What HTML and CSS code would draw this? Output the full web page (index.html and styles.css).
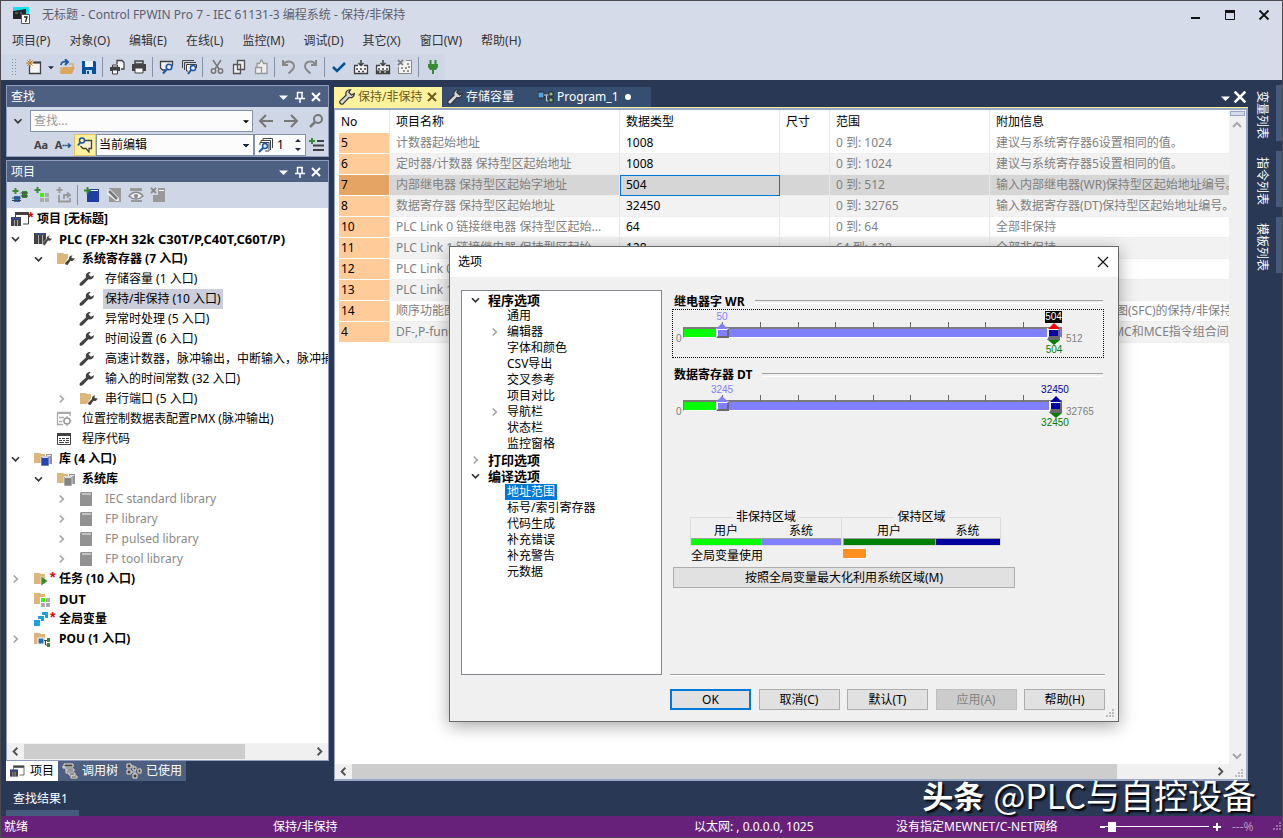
FILE: index.html
```html
<!DOCTYPE html>
<html lang="zh-CN">
<head>
    <meta charset="UTF-8">
    <meta name="viewport" content="width=device-width, initial-scale=1.0">
    <title>无标题 - Control FPWIN Pro 7</title>
    <link rel="stylesheet" href="styles.css">
</head>
<body>
    <!-- Icon sprite -->
    <svg class="sprite" aria-hidden="true">
        <symbol id="wrench" viewBox="0 0 16 16"><path d="M15 4.200a4.200 4.200 0 0 1-5.600 4L4.600 13.200Q2.500 15.500 .800 14.500 0 12.800 1.500 11.500L7 6.400A4.200 4.200 0 0 1 11.800 1L9.600 3.500 12 5.800Z" fill="#424242"/></symbol>
        <symbol id="key" viewBox="0 0 16 16"><path d="M15.300 4.500a4 4 0 0 1-5.300 4L4.500 14.300a2 2 0 0 1-3.300-2.500L7 6.200A4.200 4.200 0 0 1 11.600 .800L9.800 3.200 12.500 6Z" fill="#d8d8d8" stroke="#333" stroke-width="1.200"/></symbol>
        <symbol id="down" viewBox="0 0 16 16"><path d="M4 6l4 4 4-4" fill="none" stroke="#333" stroke-width="2"/></symbol>
        <symbol id="right" viewBox="0 0 16 16"><path d="M6 4l4 4-4 4" fill="none" stroke="#a6a6a6" stroke-width="2"/></symbol>
        <symbol id="folder-wrench" viewBox="0 0 20 16"><path d="M1 2h6l1 1h4v4L8 13H1z" fill="#dcb67a"/><path d="M18.500 7a3 3 0 0 1-4 2.800L11.500 14l-2-.500L9 12l4-4a3 3 0 0 1 3.500-3.500L15.200 6.200 17 7.500Z" fill="#424242"/></symbol>
        <symbol id="plc" viewBox="0 0 20 16"><path d="M1 2h12v11H1z" fill="#424242"/><path d="M2 3h3M6 3h3M10 3h3" stroke="#2b50e0" stroke-width="1.500"/><path d="M5.500 4v9M9.500 4v9" stroke="#aaa"/><path d="M19 7a3 3 0 0 1-4 2.800L12 14.500l-2-.500L9.500 12l4-4A3 3 0 0 1 17 4.500L15.700 6.200 17.500 7.500Z" fill="#424242" stroke="#fff" stroke-width=".5"/></symbol>
        <symbol id="project" viewBox="0 0 20 16"><path d="M4 1h14v3H4z" fill="#424242"/><path d="M17.500 4v9H12M4.500 4v3" stroke="#424242" fill="none"/><path d="M0 6h10v9H0z" fill="#424242"/><path d="M1 7.500h2M4 7.500h2M7 7.500h2" stroke="#2b50e0" stroke-width="1.500"/><path d="M3.500 9v6M6.500 9v6" stroke="#aaa"/></symbol>
        <symbol id="table-cfg" viewBox="0 0 16 16"><path d="M1 1.500h13V5M1.500 2v11.500H7M3 6.500h5M3 10.500h3" stroke="#aaa" stroke-width="1.300" fill="none"/><path d="M1 1h14v2H1z" fill="#aaa"/><circle cx="11" cy="10" r="3" fill="none" stroke="#999" stroke-width="1.500"/><path d="M11 5v2M11 13v2M6.500 10H8M14 10h1.500" stroke="#999"/></symbol>
        <symbol id="code" viewBox="0 0 16 16"><path d="M1.500 2.500h13v11h-13z" fill="#fff" stroke="#424242"/><path d="M1 2h14v3H1z" fill="#424242"/><path d="M3 7.500h2M6 7.500h3M10 7.500h3M3 9.500h3M7 9.500h2M10 9.500h3M3 11.500h5M9 11.500h4" stroke="#424242"/></symbol>
        <symbol id="lib" viewBox="0 0 20 16"><path d="M1 2h6l1 1h4v9H1z" fill="#dcb67a"/><path d="M13 3h6v10h-6z" fill="#929292"/><path d="M8 5.500h8V15H8z" fill="currentColor" stroke="#fff" stroke-width=".600"/><path d="M9 6.500h6M14 4.500h4" stroke="#fff" stroke-width=".800"/></symbol>
        <symbol id="book" viewBox="0 0 16 16"><path d="M1 2l1-1h11v14H1z" fill="#929292"/><path d="M3 3h9" stroke="#f4f4f4"/></symbol>
        <symbol id="task" viewBox="0 0 20 16"><path d="M1 2h6l1 1h4v10H1z" fill="#dcb67a"/><path d="M8 5l7 5-7 5z" fill="#388a34" stroke="#fff" stroke-width=".600"/></symbol>
        <symbol id="dut" viewBox="0 0 20 16"><path d="M1 2h6l1 1h4v10H1z" fill="#dcb67a"/><path d="M7 6h10v10H7z" fill="#fff"/><path d="M8 7h4v4H8z" fill="#40f000"/><path d="M13 7h4v4h-4zM8 12h4v4H8zM13 12h4v4h-4z" fill="#aaa"/></symbol>
        <symbol id="globals" viewBox="0 0 20 16"><path d="M1 9h6v6H1zM5 5h6v5H8V8H5zM9 1h6v6h-3V4H9z" fill="#1ba1e2"/></symbol>
        <symbol id="pou" viewBox="0 0 20 16"><path d="M1 2h6l1 1h4v10H1z" fill="#dcb67a"/><path d="M5 7h6v6H5z" fill="#1e6fc0" stroke="#fff"/><path d="M11 9.500h4M12.500 9v5H15" stroke="#424242" fill="none"/><path d="M14 7h3v4h-3zM14 12h3v4h-3z" fill="#388a34"/></symbol>
        <symbol id="caret" viewBox="0 0 8 8"><path d="M0 3h8L4 7z" fill="currentColor"/></symbol>
        <symbol id="pin" viewBox="0 0 12 12"><path d="M3.500 1v6M3 1.500h6M8 1v6M1 7.500h10M6 8v4" stroke="#fff" stroke-width="1.500" fill="none"/></symbol>
        <symbol id="close" viewBox="0 0 12 12"><path d="M2 2l8 8M10 2l-8 8" stroke="currentColor" stroke-width="2"/></symbol>
        <symbol id="lens" viewBox="0 0 16 16"><circle cx="10" cy="6" r="4" fill="none" stroke="currentColor" stroke-width="2"/><path d="M7 9l-5 5" stroke="currentColor" stroke-width="2.500"/></symbol>
        <symbol id="printer" viewBox="0 0 16 16"><path d="M4 2h8v3H4z" fill="none" stroke="#424242" stroke-width="1.500"/><path d="M1 5h14v7H1z" fill="#424242"/><path d="M4 9h8v5H4z" fill="#f6f6f6" stroke="#424242"/></symbol>
        <symbol id="preview" viewBox="0 0 16 16"><path d="M6 11H3.500L1.500 9V2.500h12V7" fill="#f2f2f2" stroke="#424242" stroke-width="1.300"/><circle cx="10" cy="8" r="2.800" fill="#e6eefa" stroke="#1c55a5" stroke-width="1.600"/><path d="M8 10l-4 4.500" stroke="#1c55a5" stroke-width="2"/></symbol>
        <symbol id="build" viewBox="0 0 16 16"><path d="M1.500 7v7.500h13V7" fill="#f6f6f6" stroke="#424242" stroke-width="1.300"/><path d="M1 6.500h4M11 6.500h4M3 10h2M7 10h2M11 10h2M5 12.500h2M9 12.500h2" stroke="#424242" stroke-width="1.600"/><path d="M8 1v5M5.500 4L8 6.500 10.500 4" stroke="#424242" stroke-width="1.500" fill="none"/></symbol>
        <symbol id="plus" viewBox="0 0 8 8"><path d="M4 0v8M0 4h8" stroke="currentColor" stroke-width="2"/></symbol>
        <symbol id="grip" viewBox="0 0 10 10"><path d="M7 0h2v2H7zM4 3h2v2H4zM7 3h2v2H7zM1 6h2v2H1zM4 6h2v2H4zM7 6h2v2H7z" fill="currentColor"/></symbol>
    </svg>

    <!-- Title bar -->
    <header class="titlebar">
        <svg class="app-icon" viewBox="0 0 18 18"><path d="M1 1h16v11H1z" fill="#19dff0"/><path d="M1 5l13-2v10H1z" fill="#262626"/><path d="M3 7h3M8 7h2" stroke="#888"/><path d="M9.500 8.500h8v9h-8z" fill="#fff" stroke="#555"/><path d="M12 11h3l-1.500 5" stroke="#222" stroke-width="1.300" fill="none"/></svg>
        <span class="app-title">无标题 - Control FPWIN Pro 7 - IEC 61131-3 编程系统 - 保持/非保持</span>
        <div class="win-buttons">
            <button aria-label="最小化"><svg viewBox="0 0 12 12"><path d="M1 9h9" stroke="#111" stroke-width="2"/></svg></button>
            <button aria-label="最大化"><svg viewBox="0 0 12 12"><path d="M1.500 2h9v8.500h-9z" fill="none" stroke="#111"/><path d="M1 2.500h10" stroke="#111" stroke-width="3"/></svg></button>
            <button aria-label="关闭"><svg viewBox="0 0 12 12"><path d="M1.500 1.500l9 9M10.500 1.500l-9 9" stroke="#111" stroke-width="1.800"/></svg></button>
        </div>
    </header>

    <nav class="menubar">
        <a href="#">项目(P)</a>
        <a href="#">对象(O)</a>
        <a href="#">编辑(E)</a>
        <a href="#">在线(L)</a>
        <a href="#">监控(M)</a>
        <a href="#">调试(D)</a>
        <a href="#">其它(X)</a>
        <a href="#">窗口(W)</a>
        <a href="#">帮助(H)</a>
    </nav>

    <!-- Main toolbar -->
    <div class="toolbar-row">
        <div class="toolbar">
            <span class="handle"></span>
            <button aria-label="新建"><svg viewBox="0 0 16 16"><path d="M3.500 6v8.500h11V3.500H7" fill="#f6f6f6" stroke="#424242" stroke-width="1.300"/><path d="M8 2.500h7v2H8z" fill="#424242"/><path d="M4 0v8M0 4h8M1.300 1.300l5.400 5.400M6.700 1.300L1.300 6.700" stroke="#c27d1a"/></svg></button>
            <button class="slim" aria-label="更多"><svg viewBox="0 0 8 8"><use href="#caret"/></svg></button>
            <button aria-label="打开"><svg viewBox="0 0 16 16"><path d="M2 8V14M10 5h4v3" stroke="#dcb67a" stroke-width="2" fill="none"/><path d="M4 8h12l-3 7H1z" fill="#dca560"/><path d="M2 6c0-3 3-4 6-3M6 0l3 3-3 3" stroke="#1c55a5" stroke-width="1.800" fill="none"/></svg></button>
            <button aria-label="保存"><svg viewBox="0 0 16 16"><path d="M1 2h13l1 1v12H1z" fill="#00539c"/><path d="M4 2h8v6H4z" fill="#eef3fb"/><path d="M5 11h6v4H5z" fill="#d6dbe9"/><path d="M6 12h2v3H6z" fill="#00539c"/></svg></button>
            <i class="sep"></i>
            <button aria-label="打印全部"><svg viewBox="0 0 16 16"><path d="M8 5V1.500h5l2 2V10h-3" fill="#f6f6f6" stroke="#424242" stroke-width="1.300"/><path d="M1 8h10v4H1z" fill="#424242"/><path d="M3.500 6v2h5V6zM3.500 11h5v4h-5z" fill="#f6f6f6" stroke="#424242"/></svg></button>
            <button aria-label="打印"><svg><use href="#printer"/></svg></button>
            <i class="sep"></i>
            <button aria-label="预览"><svg><use href="#preview"/></svg></button>
            <button aria-label="预览全部"><svg viewBox="0 0 16 16"><path d="M1.500 9V1.500H13M3.500 11V3.500H15" fill="none" stroke="#424242"/><path d="M7 12H5.500V5.500h10V9" fill="#f2f2f2" stroke="#424242"/><circle cx="12" cy="9" r="2.600" fill="#e6eefa" stroke="#1c55a5" stroke-width="1.500"/><path d="M10 11l-3 4" stroke="#1c55a5" stroke-width="2"/></svg></button>
            <i class="sep"></i>
            <button aria-label="剪切"><svg viewBox="0 0 16 16"><path d="M4 1l6 9M12 1L6 10" stroke="#777" stroke-width="1.500"/><circle cx="4.500" cy="12" r="2.200" fill="none" stroke="#777" stroke-width="1.500"/><circle cx="11.500" cy="12" r="2.200" fill="none" stroke="#777" stroke-width="1.500"/></svg></button>
            <button aria-label="复制"><svg viewBox="0 0 16 16"><path d="M6.500 1.500h7v9h-7zM2.500 5.500h7v9h-7z" fill="#eee" stroke="#555" stroke-width="1.300"/></svg></button>
            <button aria-label="粘贴"><svg viewBox="0 0 16 16"><path d="M4 9V4.500h2.500L8 1.500h1L10.500 4.500H14v10H9" fill="#eee" stroke="#999" stroke-width="1.300"/><path d="M2.500 8.500h6v6h-6z" fill="#eee" stroke="#999" stroke-width="1.300"/></svg></button>
            <i class="sep"></i>
            <button aria-label="撤销"><svg viewBox="0 0 16 16"><path d="M2 1v5h5M2.500 5.500c2-4 8-4 10-.500s-1 6-5 9.500" stroke="#888" stroke-width="2" fill="none"/></svg></button>
            <button aria-label="重做"><svg viewBox="0 0 16 16"><path d="M13 1v5H8M12.500 5.500c-2-4-8-4-10-.500s1 6 5 9.500" stroke="#888" stroke-width="2" fill="none"/></svg></button>
            <i class="sep"></i>
            <button aria-label="检查"><svg viewBox="0 0 16 16"><path d="M2 8l4 4 8-8" stroke="#00539c" stroke-width="2.500" fill="none"/></svg></button>
            <button aria-label="编译"><svg><use href="#build"/></svg></button>
            <button aria-label="全部编译"><svg viewBox="0 0 16 16"><use href="#build"/><path d="M1 13h14" stroke="#424242" stroke-width="3"/><path d="M4 13h2M9 13h2" stroke="#fff"/></svg></button>
            <button aria-label="停止编译"><svg viewBox="0 0 16 16"><path d="M9 1.500h5.500v13h-13V8" fill="#f2f2f2" stroke="#888"/><path d="M1 1l5 5M6 1L1 6M4 9h2M8 9h2M6 12h2M10 12h2M10 5h2M11 8h2" stroke="#777" stroke-width="1.700"/></svg></button>
            <i class="sep"></i>
            <button aria-label="联机"><svg viewBox="0 0 16 16"><path d="M3 5h10v3l-2 3H5L3 8z" fill="#388a34"/><path d="M5.500 1v5M10.500 1v5M8 10v5" stroke="#388a34" stroke-width="2"/></svg></button>
        </div>
    </div>

    <main class="workspace">
        <!-- Left docks -->
        <aside class="dock">
            <section class="panel">
                <div class="panel-head">
                    <h2>查找</h2>
                    <svg class="tri"><use href="#caret"/></svg><svg><use href="#pin"/></svg><svg><use href="#close"/></svg>
                </div>
                <div class="find-body">
                    <div class="find-row">
                        <button class="find-toggle" aria-label="展开"><svg><use href="#down"/></svg></button>
                        <div class="combo">
                            <input type="text" placeholder="查找..." aria-label="查找">
                            <svg><use href="#caret"/></svg>
                        </div>
                        <button class="find-nav" aria-label="上一个"><svg viewBox="0 0 16 16"><path d="M15 8H2M8 2L2 8l6 6" stroke="#777" stroke-width="2" fill="none"/></svg></button>
                        <button class="find-nav" aria-label="下一个"><svg viewBox="0 0 16 16"><path d="M1 8h13M8 2l6 6-6 6" stroke="#777" stroke-width="2" fill="none"/></svg></button>
                        <button class="find-nav" aria-label="查找全部"><svg><use href="#lens"/></svg></button>
                    </div>
                    <div class="find-row second">
                        <button class="opt">Aa</button>
                        <button class="opt">A<b>⇢</b></button>
                        <button class="opt on" aria-label="注释"><svg viewBox="0 0 16 16"><path d="M8 3.500h6.500v8H12V15l-3-3.500H6L3.500 9" fill="#f6f0d0" stroke="#424242" stroke-width="1.300"/><circle cx="5" cy="3.500" r="2.500" fill="none" stroke="#1c55a5" stroke-width="1.500"/><path d="M3.500 5L1 8.500" stroke="#1c55a5" stroke-width="2"/></svg></button>
                        <select aria-label="范围"><option>当前编辑</option></select>
                        <div class="spin">
                            <svg viewBox="0 0 16 16"><path d="M5 4V1.500h9.500V11M3 6V3.500h9.500V13M2 8V5.500h9V14H7" fill="none" stroke="#424242"/><circle cx="7" cy="9" r="2.500" fill="#e6eefa" stroke="#1c55a5" stroke-width="1.500"/><path d="M5 11l-4 4" stroke="#1c55a5" stroke-width="2"/></svg>
                            <input type="number" value="1" aria-label="结果窗口">
                            <svg class="arrows" viewBox="0 0 8 16"><path d="M1 5h6L4 2zM1 11h6l-3 3z" fill="#1b293e"/></svg>
                        </div>
                        <button class="opt" aria-label="列表"><svg viewBox="0 0 16 16"><path d="M3 1v6M0 4h6" stroke="#388a34" stroke-width="2"/><path d="M8 4h7M4 8.500h11M4 13h11" stroke="#424242" stroke-width="2"/></svg></button>
                    </div>
                </div>
            </section>

            <section class="panel grow">
                <div class="panel-head">
                    <h2>项目</h2>
                    <svg class="tri"><use href="#caret"/></svg><svg><use href="#pin"/></svg><svg><use href="#close"/></svg>
                </div>
                <div class="toolbar small">
                    <button aria-label="添加PLC"><svg viewBox="0 0 16 16"><path d="M3.500 1v6M.500 4h6" stroke="#388a34" stroke-width="2"/><path d="M2 9h6v6H2z" fill="#1e6fc0"/><path d="M10 4h5v7h-5z" fill="#388a34"/><path d="M0 11h9M0 13.500h9M8.500 6H16M8.500 9H16" stroke="#424242"/></svg></button>
                    <button aria-label="添加DUT"><svg viewBox="0 0 16 16"><path d="M3.500 0v6M.500 3h6" stroke="#388a34" stroke-width="2"/><path d="M6 6h4v4H6z" fill="#40f000"/><path d="M11 6h4v4h-4zM6 11h4v4H6zM11 11h4v4h-4z" fill="#aaa"/></svg></button>
                    <button aria-label="添加文件夹"><svg viewBox="0 0 16 16"><path d="M3.500 0v6M.500 3h6" stroke="#999" stroke-width="2"/><path d="M3 8v6.500h11V11M8 12V8h5M11 5.500L14 8l-3 2.500" stroke="#999" stroke-width="1.800" fill="none"/></svg></button>
                    <i class="sep"></i>
                    <button aria-label="新建对象"><svg viewBox="0 0 16 16"><path d="M3 3l2-1h10v13H3z" fill="#1f3fa0"/><path d="M6 3.500h8" stroke="#fff"/><path d="M3.500 0v7M0 3.500h7" stroke="#388a34" stroke-width="2"/></svg></button>
                    <button aria-label="编辑对象"><svg viewBox="0 0 16 16"><path d="M3 1h12v14H3z" fill="#999"/><path d="M1 4l3-2 9 9v3h-3L1 7z" fill="#eee"/><path d="M3 4l8 8" stroke="#777" stroke-width="2.500"/></svg></button>
                    <button aria-label="查看对象"><svg viewBox="0 0 16 16"><path d="M2 1h12v3H2zM3 13h11v2H3z" fill="#999"/><path d="M1 9c4-5 10-5 14 0-4 4-10 4-14 0z" fill="#eee" stroke="#888" stroke-width="1.300"/><circle cx="8" cy="9" r="2" fill="#888"/></svg></button>
                    <button aria-label="删除对象"><svg viewBox="0 0 16 16"><path d="M8 1h7v14H3V8h5z" fill="#999"/><path d="M9 3.500h5" stroke="#fff"/><path d="M1 1l5 5M6 1L1 6" stroke="#888" stroke-width="1.800"/></svg></button>
                </div>
                <ul class="tree">
                    <li class="root"><svg class="ico"><use href="#project"/></svg><i class="star">*</i><b>项目 [无标题]</b></li>
                    <li><svg class="exp"><use href="#down"/></svg><svg class="ico"><use href="#plc"/></svg><b class="latin">PLC (FP-XH 32k C30T/P,C40T,C60T/P)</b></li>
                    <li class="lv1"><svg class="exp"><use href="#down"/></svg><svg class="ico"><use href="#folder-wrench"/></svg><b>系统寄存器 (7 入口)</b></li>
                    <li class="lv2"><svg class="exp"></svg><svg class="ico sq"><use href="#wrench"/></svg><span>存储容量 (1 入口)</span></li>
                    <li class="lv2"><svg class="exp"></svg><svg class="ico sq"><use href="#wrench"/></svg><span class="picked">保持/非保持 (10 入口)</span></li>
                    <li class="lv2"><svg class="exp"></svg><svg class="ico sq"><use href="#wrench"/></svg><span>异常时处理 (5 入口)</span></li>
                    <li class="lv2"><svg class="exp"></svg><svg class="ico sq"><use href="#wrench"/></svg><span>时间设置 (6 入口)</span></li>
                    <li class="lv2"><svg class="exp"></svg><svg class="ico sq"><use href="#wrench"/></svg><span>高速计数器，脉冲输出，中断输入，脉冲捕捉输入</span></li>
                    <li class="lv2"><svg class="exp"></svg><svg class="ico sq"><use href="#wrench"/></svg><span>输入的时间常数 (32 入口)</span></li>
                    <li class="lv2"><svg class="exp"><use href="#right"/></svg><svg class="ico"><use href="#folder-wrench"/></svg><span>串行端口 (5 入口)</span></li>
                    <li class="lv1"><svg class="exp"></svg><svg class="ico sq"><use href="#table-cfg"/></svg><span>位置控制数据表配置PMX (脉冲输出)</span></li>
                    <li class="lv1"><svg class="exp"></svg><svg class="ico sq"><use href="#code"/></svg><span>程序代码</span></li>
                    <li><svg class="exp"><use href="#down"/></svg><svg class="ico blue"><use href="#lib"/></svg><b>库 (4 入口)</b></li>
                    <li class="lv1"><svg class="exp"><use href="#down"/></svg><svg class="ico gray"><use href="#lib"/></svg><b>系统库</b></li>
                    <li class="lv2 dim"><svg class="exp"><use href="#right"/></svg><svg class="ico sq"><use href="#book"/></svg><span>IEC standard library</span></li>
                    <li class="lv2 dim"><svg class="exp"><use href="#right"/></svg><svg class="ico sq"><use href="#book"/></svg><span>FP library</span></li>
                    <li class="lv2 dim"><svg class="exp"><use href="#right"/></svg><svg class="ico sq"><use href="#book"/></svg><span>FP pulsed library</span></li>
                    <li class="lv2 dim"><svg class="exp"><use href="#right"/></svg><svg class="ico sq"><use href="#book"/></svg><span>FP tool library</span></li>
                    <li><svg class="exp"><use href="#right"/></svg><svg class="ico"><use href="#task"/></svg><i class="star">*</i><b>任务 (10 入口)</b></li>
                    <li><svg class="exp"></svg><svg class="ico"><use href="#dut"/></svg><b class="latin">DUT</b></li>
                    <li><svg class="exp"></svg><svg class="ico"><use href="#globals"/></svg><i class="star">*</i><b>全局变量</b></li>
                    <li><svg class="exp"><use href="#right"/></svg><svg class="ico"><use href="#pou"/></svg><b>POU (1 入口)</b></li>
                </ul>
                <div class="hscroll">
                    <svg class="flip"><use href="#right"/></svg>
                    <div class="lane"><i class="thumb part"></i></div>
                    <svg><use href="#right"/></svg>
                </div>
            </section>
            <div class="dock-tabs">
                <button class="active"><svg viewBox="0 0 20 20"><use href="#project"/></svg>项目</button>
                <button><svg viewBox="0 0 16 16"><path d="M2 1h9v3H2zM5 6h7v2H5zM7 10h6v2H7zM9 13h6v2H9z" fill="#424242" stroke="#f0e4d4"/><path d="M1 3v2h3v5h3" stroke="#f0e4d4" fill="none"/></svg>调用树</button>
                <button><svg viewBox="0 0 16 16"><path d="M1 1h4v4H1zM1 7h4v4H1zM7 4h3v3H7zM7 11h4v4H7zM12 6h3v4h-3z" fill="#424242" stroke="#f0e4d4"/><path d="M5 3h3M5 9h3M9 7v4" stroke="#f0e4d4"/></svg>已使用</button>
            </div>
        </aside>

        <!-- Editor -->
        <section class="editor">
            <div class="tabs">
                <button class="tab current"><svg class="big"><use href="#key"/></svg>保持/非保持<svg class="x"><use href="#close"/></svg></button>
                <div class="tab-rest">
                    <button class="tab"><svg class="big"><use href="#key"/></svg>存储容量</button>
                    <button class="tab prog"><svg class="big" viewBox="0 0 16 16"><path d="M0 3h6v6H0z" fill="#4fa3e8" stroke="#222"/><path d="M6 6h5M8.500 6v6H11" stroke="#ccc" fill="none"/><path d="M11 3h4v4h-4zM11 9h4v4h-4z" fill="#7cc67c" stroke="#222"/></svg>Program_1<i class="dot"></i></button>
                </div>
                <div class="tab-tools"><svg class="tri"><use href="#caret"/></svg><svg class="cl"><use href="#close"/></svg></div>
            </div>
            <div class="frame">
                <div class="grid-area">
                    <div class="grid-wrap">
                        <table>
                            <colgroup><col class="c-no"><col class="c-name"><col class="c-type"><col class="c-size"><col class="c-range"><col></colgroup>
                            <thead>
                                <tr><th>No</th><th>项目名称</th><th>数据类型</th><th>尺寸</th><th>范围</th><th>附加信息</th></tr>
                            </thead>
                            <tbody>
                                <tr><th>5</th><td>计数器起始地址</td><td class="val">1008</td><td></td><td>0 到: 1024</td><td>建议与系统寄存器6设置相同的值。</td></tr>
                                <tr><th>6</th><td>定时器/计数器 保持型区起始地址</td><td class="val">1008</td><td></td><td>0 到: 1024</td><td>建议与系统寄存器5设置相同的值。</td></tr>
                                <tr class="sel"><th>7</th><td>内部继电器 保持型区起始字地址</td><td class="val">504</td><td></td><td>0 到: 512</td><td>输入内部继电器(WR)保持型区起始地址编号。</td></tr>
                                <tr><th>8</th><td>数据寄存器 保持型区起始地址</td><td class="val">32450</td><td></td><td>0 到: 32765</td><td>输入数据寄存器(DT)保持型区起始地址编号。</td></tr>
                                <tr><th>10</th><td>PLC Link 0 链接继电器 保持型区起始...</td><td class="val">64</td><td></td><td>0 到: 64</td><td>全部非保持</td></tr>
                                <tr><th>11</th><td>PLC Link 1 链接继电器 保持型区起始...</td><td class="val">128</td><td></td><td>64 到: 128</td><td>全部非保持</td></tr>
                                <tr><th>12</th><td>PLC Link 0</td><td></td><td></td><td></td><td></td></tr>
                                <tr><th>13</th><td>PLC Link 1</td><td></td><td></td><td></td><td></td></tr>
                                <tr><th>14</th><td>顺序功能图</td><td></td><td></td><td></td><td>设置启动时的顺序功能图(SFC)的保持/非保持。</td></tr>
                                <tr><th>4</th><td>DF-,P-function</td><td></td><td></td><td></td><td>DF-,P-指令的执行在各MC和MCE指令组合间的处理</td></tr>
                            </tbody>
                        </table>
                    </div>
                    <div class="vscroll">
                        <i class="split"></i>
                        <svg class="up"><use href="#right"/></svg>
                        <svg class="dn"><use href="#right"/></svg>
                    </div>
                </div>
                <div class="hscroll">
                    <svg class="flip"><use href="#right"/></svg>
                    <div class="lane"><i class="thumb most"></i></div>
                    <svg><use href="#right"/></svg>
                    <svg class="corner" viewBox="0 0 10 10"><use href="#grip"/></svg>
                </div>
            </div>
        </section>

        <aside class="side-tabs">
            <button>变量列表</button>
            <button>指令列表</button>
            <button>模板列表</button>
        </aside>
    </main>

    <div class="results"><button>查找结果1</button></div>

    <footer class="status">
        <span class="s-ready">就绪</span>
        <span class="s-mode">保持/非保持</span>
        <span class="s-net">以太网: , 0.0.0.0, 1025</span>
        <span class="s-link">没有指定MEWNET/C-NET网络</span>
        <span class="zoom">
            <i class="minus"></i>
            <input type="range" min="0" max="100" value="3" aria-label="缩放">
            <svg viewBox="0 0 8 8"><use href="#plus"/></svg>
        </span>
        <span class="s-pct">---%</span>
        <svg class="corner" viewBox="0 0 10 10"><use href="#grip"/></svg>
    </footer>

    <!-- Options dialog -->
    <div class="dialog" role="dialog" aria-label="选项">
        <div class="dlg-title">
            <span>选项</span>
            <button aria-label="关闭"><svg viewBox="0 0 12 12"><path d="M1 1l10 10M11 1L1 11" stroke="#111" stroke-width="1.200"/></svg></button>
        </div>
        <div class="dlg-body">
            <ul class="opts">
                <li class="top"><svg><use href="#down"/></svg>程序选项</li>
                <li><svg></svg><span>通用</span></li>
                <li><svg><use href="#right"/></svg><span>编辑器</span></li>
                <li><svg></svg><span>字体和颜色</span></li>
                <li><svg></svg><span>CSV导出</span></li>
                <li><svg></svg><span>交叉参考</span></li>
                <li><svg></svg><span>项目对比</span></li>
                <li><svg><use href="#right"/></svg><span>导航栏</span></li>
                <li><svg></svg><span>状态栏</span></li>
                <li><svg></svg><span>监控窗格</span></li>
                <li class="top"><svg><use href="#right"/></svg>打印选项</li>
                <li class="top"><svg><use href="#down"/></svg>编译选项</li>
                <li><svg></svg><span class="active">地址范围</span></li>
                <li><svg></svg><span>标号/索引寄存器</span></li>
                <li><svg></svg><span>代码生成</span></li>
                <li><svg></svg><span>补充错误</span></li>
                <li><svg></svg><span>补充警告</span></li>
                <li><svg></svg><span>元数据</span></li>
            </ul>
            <div class="dlg-main">
                <h3>继电器字 WR</h3>
                <div class="ranger focus">
                    <span class="lo">0</span>
                    <div class="track"><i class="user"></i></div>
                    <span class="hi">512</span>
                    <div class="overlay">
                        <input class="t-sys" type="range" min="0" max="512" value="50" aria-label="WR 非保持">
                        <input class="t-hold" type="range" min="0" max="512" value="504" aria-label="WR 保持">
                        <svg viewBox="0 0 387 50">
                            <path d="M43.500 12v6M81.500 12v6M119.500 12v6M156.500 12v6M194.500 12v6M231.500 12v6M269.500 12v6M306.500 12v6M344.500 12v6" stroke="#696969"/>
                            <path d="M37 19l6-6 6 6z" fill="#8080ff"/>
                            <path d="M369 19l6-6 6 6z" fill="#f00"/><path d="M369 30h12l-6 5z" fill="#008000"/>
                        </svg>
                        <span class="mark sys">50</span>
                        <span class="mark top black">504</span>
                        <span class="mark bottom">504</span>
                    </div>
                </div>
                <h3>数据寄存器 DT</h3>
                <div class="ranger">
                    <span class="lo">0</span>
                    <div class="track"><i class="user"></i></div>
                    <span class="hi">32765</span>
                    <div class="overlay">
                        <input class="t-sys" type="range" min="0" max="32765" value="3245" aria-label="DT 非保持">
                        <input class="t-hold" type="range" min="0" max="32765" value="32450" aria-label="DT 保持">
                        <svg viewBox="0 0 387 50">
                            <path d="M43.500 12v6M81.500 12v6M119.500 12v6M156.500 12v6M194.500 12v6M231.500 12v6M269.500 12v6M306.500 12v6M344.500 12v6" stroke="#696969"/>
                            <path d="M37 19l6-6 6 6z" fill="#8080ff"/>
                            <path d="M371 19l6-6 6 6z" fill="#0000a0"/><path d="M371 30h12l-6 5z" fill="#008000"/>
                        </svg>
                        <span class="mark sys">3245</span>
                        <span class="mark top">32450</span>
                        <span class="mark bottom">32450</span>
                    </div>
                </div>

                <div class="areas">
                    <fieldset class="volatile">
                        <legend>非保持区域</legend>
                        <div><span>用户</span><i class="lime"></i></div>
                        <div><span>系统</span><i class="violet"></i></div>
                    </fieldset>
                    <fieldset class="hold">
                        <legend>保持区域</legend>
                        <div><span>用户</span><i class="green"></i></div>
                        <div><span>系统</span><i class="navy"></i></div>
                    </fieldset>
                </div>
                <div class="globals-used"><span>全局变量使用</span><i></i></div>
                <button class="btn wide">按照全局变量最大化利用系统区域(M)</button>

                <div class="dlg-buttons">
                    <button class="btn ok">OK</button>
                    <button class="btn">取消(C)</button>
                    <button class="btn">默认(T)</button>
                    <button class="btn" disabled>应用(A)</button>
                    <button class="btn">帮助(H)</button>
                </div>
            </div>
        </div>
        <svg class="size-grip" viewBox="0 0 10 10"><use href="#grip"/></svg>
    </div>

    <div class="watermark"><b>头条</b><span>@PLC与自控设备</span></div>
</body>
</html>
```
FILE: styles.css
```css
* {
    box-sizing: border-box;
}
body {
    margin: 0;
    height: 100vh;
    display: flex;
    flex-direction: column;
    position: relative;
    overflow: hidden;
    border: 1px solid #4a4a50;
    background: #293955;
    color: #000;
    font: 12px/20px "Noto Sans", "Noto Sans CJK SC", sans-serif;
}
button, input, select {
    font: inherit;
    color: inherit;
    margin: 0;
    padding: 0;
    border: 0;
    background: none;
}
h2, h3, ul, fieldset {
    margin: 0;
    padding: 0;
    font-size: 12px;
}
ul {
    list-style: none;
}
svg {
    display: block;
    flex: none;
    width: 16px;
    height: 16px;
}
.sprite {
    position: absolute;
    width: 0;
    height: 0;
}

/* Title, menu, toolbar */
.titlebar {
    display: flex;
    align-items: center;
    height: 27px;
    padding: 0 1px 0 11px;
    background: #d6dbe9;
    color: #5a6070;
}
.app-icon {
    width: 18px;
    height: 18px;
}
.app-title {
    flex: 1;
    margin-left: 12px;
}
.win-buttons {
    display: flex;
}
.win-buttons button {
    width: 34px;
    height: 27px;
    display: grid;
    place-items: center;
}
.win-buttons svg {
    width: 12px;
    height: 12px;
}
.menubar {
    display: flex;
    gap: 19px;
    height: 26px;
    padding: 3px 11px 0;
    background: #d6dbe9;
}
.menubar a {
    color: #333;
    text-decoration: none;
}
.toolbar-row {
    display: flex;
    height: 26px;
    background: #d6dbe9;
}
.toolbar {
    display: flex;
    align-items: center;
    padding: 0 1px 0 10px;
    background: #cfd6e5;
}
.toolbar button {
    width: 22px;
    height: 22px;
    display: grid;
    place-items: center;
    color: #1b293e;
}
.toolbar button.slim {
    width: 11px;
}
.slim svg {
    width: 6px;
    height: 6px;
}
.handle {
    width: 6px;
    height: 18px;
    margin-right: 6px;
    background: radial-gradient(circle, #8090a8 1px, transparent 1px) 0 0 / 3px 3px;
}
.sep {
    width: 6px;
    height: 20px;
    background: linear-gradient(#8591a8, #8591a8) 2px 0 / 1px 100% no-repeat;
}

/* Workspace */
.workspace {
    flex: 1;
    min-height: 0;
    display: flex;
    padding-left: 5px;
}
.dock {
    width: 323px;
    display: flex;
    flex-direction: column;
    padding-top: 5px;
}
.panel {
    border: 1px solid #8e9bbc;
    margin-bottom: 3px;
    background: #cfd6e5;
    display: flex;
    flex-direction: column;
}
.panel.grow {
    flex: 1;
    min-height: 0;
    margin-bottom: 0;
}
.panel-head {
    display: flex;
    align-items: center;
    gap: 4px;
    height: 21px;
    padding: 0 6px 0 4px;
    background: #4d6082;
    color: #fff;
}
.panel-head h2 {
    flex: 1;
    font-weight: normal;
}
.panel-head svg {
    width: 12px;
    height: 12px;
}
.panel-head .tri, .tab-tools .tri {
    width: 9px;
    height: 9px;
    margin-right: 2px;
}
.find-body {
    padding: 3px 0 0 4px;
}
.find-row {
    display: flex;
    align-items: center;
    height: 22px;
}
.find-row.second {
    margin-top: 2px;
    padding-left: 19px;
}
.find-toggle {
    width: 19px;
}
.find-toggle svg {
    width: 14px;
    height: 14px;
}
.combo {
    display: flex;
    align-items: center;
    width: 223px;
    height: 22px;
    padding: 0 3px;
    border: 1px solid #8591a8;
    background: #fcfcfc;
}
.combo input {
    flex: 1;
    min-width: 0;
    outline: 0;
}
.combo input::placeholder {
    color: #999;
}
.combo svg {
    width: 6px;
    height: 6px;
}
.find-nav {
    width: 25px;
    display: grid;
    place-items: center;
    color: #777;
}
.find-row.second .opt {
    width: 22px;
    height: 22px;
    display: flex;
    align-items: center;
    justify-content: center;
    font-weight: bold;
    color: #424242;
    font-size: 11px;
}
.opt b {
    color: #1c55a5;
}
.find-row.second .on {
    border: 1px solid #e5c365;
    background: #fff29d;
}
.find-row select {
    appearance: none;
    flex: 1;
    height: 22px;
    padding: 0 2px;
    border: 1px solid #8591a8;
    background-color: #fcfcfc;
    background-repeat: no-repeat;
    background-image: linear-gradient(#1b293e, #1b293e), linear-gradient(#1b293e, #1b293e), linear-gradient(#1b293e, #1b293e);
    background-size: 6px 1px, 4px 1px, 2px 1px;
    background-position: right 4px top 9px, right 5px top 10px, right 6px top 11px;
}
.spin {
    display: flex;
    align-items: center;
    width: 52px;
    height: 22px;
    padding: 0 3px;
    border: 1px solid #8591a8;
    background: #fcfcfc;
}
.spin input {
    flex: 1;
    min-width: 0;
    padding-left: 3px;
    appearance: textfield;
}
.spin input::-webkit-inner-spin-button {
    appearance: none;
}
.spin .arrows {
    width: 8px;
}

/* Project tree */
.toolbar.small {
    height: 26px;
    padding: 0 0 0 2px;
}
.tree {
    flex: 1;
    min-height: 0;
    padding-top: 1px;
    overflow: hidden;
    background: #fff;
}
.tree li {
    display: flex;
    align-items: center;
    height: 20px;
    white-space: nowrap;
}
.tree .root {
    padding-left: 4px;
}
.tree .lv1 {
    padding-left: 23px;
}
.tree .lv2 {
    padding-left: 46px;
}
.tree .exp {
    width: 17px;
    height: 14px;
    margin-right: 9px;
}
.tree .ico {
    width: 20px;
    height: 16px;
    margin-right: 4px;
}
.tree .sq {
    width: 16px;
    margin-right: 8px;
}
.tree b, .tree span {
    padding: 0 2px;
}
.tree .latin {
    font-size: 13px;
}
.tree .picked {
    background: #cccedb;
}
.tree .star {
    align-self: flex-start;
    width: 6px;
    margin: 0 1px 0 -7px;
    font: bold 14px/16px "Liberation Sans", sans-serif;
    color: #e00000;
}
.dim {
    color: #8a8a8a;
}
.blue {
    color: #2446b0;
}
.gray {
    color: #848484;
}
.hscroll {
    display: flex;
    align-items: center;
    height: 17px;
    background: #f0f0f0;
}
.frame .hscroll {
    height: 15px;
}
.hscroll svg {
    width: 17px;
    height: 15px;
    filter: brightness(0.5);
}
.flip {
    transform: rotate(180deg);
}
.lane {
    flex: 1;
    height: 15px;
}
.thumb {
    display: block;
    height: 15px;
    background: #cdcdcd;
}
.thumb.part {
    width: 77%;
}
.thumb.most {
    width: 89%;
}
.dock-tabs {
    display: flex;
    height: 20px;
    margin-bottom: 1px;
}
.dock-tabs button {
    display: flex;
    align-items: center;
    gap: 4px;
    padding: 0 4px;
    background: #4d6082;
    color: #fff;
}
.dock-tabs .active {
    background: #fff;
    color: #000;
}

/* Editor */
.editor {
    flex: 1;
    min-width: 0;
    display: flex;
    flex-direction: column;
    margin: 7px 0 1px 5px;
}
.tabs {
    display: flex;
    height: 21px;
    border-bottom: 1px solid #fff29d;
    color: #fff;
}
.tab {
    display: flex;
    align-items: center;
    padding: 0 5px;
    white-space: nowrap;
}
.tab .big {
    margin-right: 3px;
}
.tab .x {
    width: 12px;
    height: 12px;
    margin-left: 4px;
}
.tab.current {
    width: 108px;
    padding: 0 3px 0 5px;
    background: #fff29d;
    color: #6d5a1a;
}
.tab-rest {
    display: flex;
    width: 209px;
    background: #364e6f;
}
.prog {
    margin-left: 14px;
}
.prog .dot {
    width: 6px;
    height: 6px;
    margin-left: 6px;
    border-radius: 50%;
    background: #fff;
}
.tab-tools {
    display: flex;
    align-items: center;
    margin-left: auto;
}
.tab-tools .cl {
    width: 16px;
    height: 16px;
}
.frame {
    flex: 1;
    min-height: 0;
    display: flex;
    flex-direction: column;
    border: 1px solid #9aa7c4;
    border-width: 2px 2px 2px 1px;
    background: #fff;
}
.grid-area {
    flex: 1;
    min-height: 0;
    display: flex;
}
.grid-wrap {
    flex: 1;
    min-width: 0;
    overflow: hidden;
    padding-left: 4px;
}
table {
    width: 100%;
    table-layout: fixed;
    border-collapse: separate;
    border-spacing: 0;
}
.c-no {
    width: 51px;
}
.c-name {
    width: 230px;
}
.c-type, .c-range {
    width: 160px;
}
.c-size {
    width: 50px;
}
table th, table td {
    height: 21px;
    padding: 0 0 0 6px;
    border-right: 1px solid #e6e6e6;
    border-bottom: 1px solid #eee;
    font-weight: normal;
    text-align: left;
    line-height: 20px;
    white-space: nowrap;
    overflow: hidden;
    color: #808080;
}
thead th {
    height: 23px;
    border-bottom: 0;
    color: #000;
}
table tr > :first-child {
    padding-left: 2px;
}
table tr > :last-child {
    border-right: 0;
}
tbody th {
    background: #ffcc99;
    color: #000;
    border-bottom-color: #fff;
}
tbody tr:nth-child(even) td {
    background: #f2f2f2;
}
tbody tr.sel td {
    background: #d6d6d6;
}
tr.sel th {
    background: #e5a464;
}
table .val {
    color: #000;
}
.sel .val {
    outline: 1px solid #0078d7;
    outline-offset: -1px;
}
.vscroll {
    display: flex;
    flex-direction: column;
    width: 17px;
    background: #f0f0f0;
}
.split {
    height: 5px;
    margin: 1px;
    border: 1px solid #9aa7c4;
    background: #d6dbe9;
}
.up {
    transform: rotate(-90deg);
}
.dn {
    margin-top: auto;
    transform: rotate(90deg);
}
.hscroll .corner {
    width: 10px;
    height: 10px;
    margin: 4px 2px 0 5px;
    color: #bbb;
    filter: none;
}
.side-tabs {
    width: 34px;
    display: flex;
    flex-direction: column;
    gap: 10px;
    padding-top: 5px;
}
.side-tabs button {
    height: 56px;
    writing-mode: vertical-rl;
    text-orientation: sideways;
    border-right: 6px solid #465a7d;
    padding: 5px 1px 0 0;
    color: #fff;
}
.results {
    height: 34px;
    padding: 5px 5px 0;
}
.results button {
    height: 29px;
    padding: 0 11px 0 7px;
    border-bottom: 6px solid #465a7d;
    color: #fff;
}

/* Status bar */
.status {
    display: flex;
    align-items: center;
    height: 21px;
    padding-left: 3px;
    background: #68217a;
    color: #fff;
}
.s-ready {
    flex: 269;
}
.s-mode {
    flex: 421;
}
.s-net {
    flex: 202;
}
.s-link {
    width: 204px;
}
.zoom {
    display: flex;
    align-items: center;
    width: 132px;
}
.zoom .minus {
    width: 5px;
    height: 2px;
    background: #fff;
}
.zoom input {
    appearance: none;
    width: 104px;
    height: 12px;
    background: linear-gradient(#fff, #fff) 0 5px / 100% 1px no-repeat;
}
.zoom input::-webkit-slider-thumb {
    appearance: none;
    width: 8px;
    height: 10px;
    background: #fff;
}
.zoom svg {
    width: 8px;
    height: 8px;
    margin-left: 4px;
}
.s-pct {
    width: 40px;
    color: #b390bd;
}
.status .corner {
    width: 10px;
    height: 10px;
    color: #9a6aa8;
}

/* Options dialog */
.dialog {
    position: absolute;
    left: 448px;
    top: 245px;
    width: 670px;
    height: 476px;
    display: flex;
    flex-direction: column;
    border: 1px solid #66686c;
    background: #f0f0f0;
    box-shadow: 0 4px 16px rgba(0, 0, 0, 0.35);
}
.dlg-title {
    display: flex;
    justify-content: space-between;
    align-items: center;
    height: 30px;
    padding: 0 9px 0 8px;
    background: #fff;
}
.dlg-title svg {
    width: 12px;
    height: 12px;
}
.dlg-body {
    flex: 1;
    min-height: 0;
    display: flex;
    gap: 8px;
    padding: 13px 13px 11px 11px;
}
.opts {
    width: 201px;
    height: 385px;
    padding: 1px 0 0 6px;
    border: 1px solid #828790;
    background: #fff;
}
.opts li {
    display: flex;
    align-items: center;
    height: 16px;
    padding-left: 19px;
    line-height: 16px;
}
.opts .top {
    padding-left: 0;
    font-size: 13px;
    font-weight: bold;
}
.opts svg {
    width: 15px;
    height: 14px;
    margin-right: 5px;
}
.opts li span {
    padding: 0 2px;
    margin-left: -2px;
}
.opts .active {
    background: #0078d7;
    color: #fff;
}
.dlg-main {
    flex: 1;
    min-width: 0;
    display: flex;
    flex-direction: column;
}
.dlg-main h3 {
    display: flex;
    align-items: center;
    gap: 10px;
    height: 19px;
    margin: 0 2px 0 4px;
    padding-top: 4px;
}
.ranger + h3 {
    margin-top: 5px;
}
.dlg-main h3::after {
    content: "";
    flex: 1;
    height: 2px;
    border-top: 1px solid #a0a0a0;
    border-bottom: 1px solid #fff;
}
.ranger {
    position: relative;
    display: flex;
    align-items: flex-start;
    height: 49px;
    margin: 0 1px 0 2px;
    border: 1px solid transparent;
    padding-top: 17px;
    font: 10px/14px "Liberation Sans", sans-serif;
    color: #808080;
}
.ranger.focus {
    border: 1px dotted #000;
}
.lo {
    width: 10px;
    padding: 5px 0 0 3px;
}
.hi {
    padding: 5px 0 0 4px;
}
.track {
    width: 379px;
    height: 11px;
    border: 2px solid #7a7a7a;
    border-width: 2px 1px 0 1px;
    border-bottom: 1px solid #fff;
    background: #8080ff;
}
.track .user {
    display: block;
    width: 36px;
    height: 8px;
    background: #00ff00;
}
.overlay {
    position: absolute;
    left: 6px;
    top: 0;
    width: 387px;
    height: 48px;
}
.overlay svg {
    position: absolute;
    left: 0;
    top: 0;
    width: 387px;
    height: 50px;
    pointer-events: none;
}
.overlay input {
    position: absolute;
    left: 0;
    top: 18px;
    width: 387px;
    height: 10px;
    appearance: none;
    pointer-events: none;
}
.overlay input::-webkit-slider-thumb {
    appearance: none;
    pointer-events: auto;
    width: 13px;
    height: 10px;
    border: 2px solid #fff;
    border-right-color: #696969;
    border-bottom-color: #696969;
    background: #8080ff;
}
.overlay .t-hold {
    height: 12px;
}
.overlay .t-hold::-webkit-slider-thumb {
    height: 12px;
    border-bottom-width: 4px;
    background: #0000a0;
}
.mark {
    position: absolute;
    top: 1px;
    left: 23px;
    width: 40px;
    line-height: 12px;
    text-align: center;
    color: #8080ff;
}
.mark.top, .mark.bottom {
    left: 356px;
    color: #0000a0;
}
.mark.black {
    left: 366px;
    width: 17px;
    background: #000;
    color: #fff;
}
.mark.bottom {
    top: 34px;
    color: #008000;
}
.mark.black + .bottom {
    left: 355px;
}
.areas {
    display: flex;
    margin: 79px 0 0 20px;
    line-height: 14px;
}
.areas fieldset {
    min-width: 0;
    height: 36px;
    display: grid;
    grid-template-columns: 70px 80px;
    border: 1px solid #dcdcdc;
}
.areas .hold {
    grid-template-columns: 92px 65px;
    border-left: 0;
    padding-left: 1px;
}
.areas legend {
    margin: 0 auto;
    padding: 0 3px;
    line-height: 14px;
}
.areas div {
    display: flex;
    flex-direction: column;
    text-align: center;
    overflow: hidden;
}
.areas i {
    height: 8px;
    border: 1px solid #a0a0a0;
    border-width: 1px 0 0 1px;
}
.areas .lime {
    background: #00ff00;
}
.areas .violet {
    background: #8080ff;
}
.areas .green {
    background: #008000;
}
.areas .navy {
    background: #0000a0;
}
.globals-used {
    display: grid;
    grid-template-columns: 152px 24px;
    margin: 2px 0 3px 21px;
    line-height: 16px;
}
.globals-used i {
    height: 10px;
    margin-top: 1px;
    border: 1px solid #fff;
    border-width: 0 1px 1px 0;
    background: #ff9020;
}
.btn {
    width: 81px;
    height: 21px;
    border: 1px solid #adadad;
    background: #e1e1e1;
    line-height: 18px;
}
.btn.wide {
    width: 342px;
    margin-left: 3px;
}
.btn.ok {
    border: 2px solid #0078d7;
}
.btn:disabled {
    border-color: #bfbfbf;
    background: #ccc;
    color: #838383;
}
.dlg-buttons {
    display: flex;
    justify-content: space-between;
    margin-top: auto;
    padding-top: 14px;
    border-top: 1px solid #a0a0a0;
    box-shadow: inset 0 1px #fff;
}
.size-grip {
    position: absolute;
    right: 3px;
    bottom: 2px;
    width: 10px;
    height: 10px;
    color: #bbb;
}
.watermark {
    position: absolute;
    right: 26px;
    bottom: 18px;
    display: flex;
    align-items: center;
    gap: 9px;
    font: 34px/48px "Noto Sans CJK SC", sans-serif;
    color: #fff;
    text-shadow: 2px 2px 2px #000;
}
.watermark b {
    font-size: 31px;
}
```
